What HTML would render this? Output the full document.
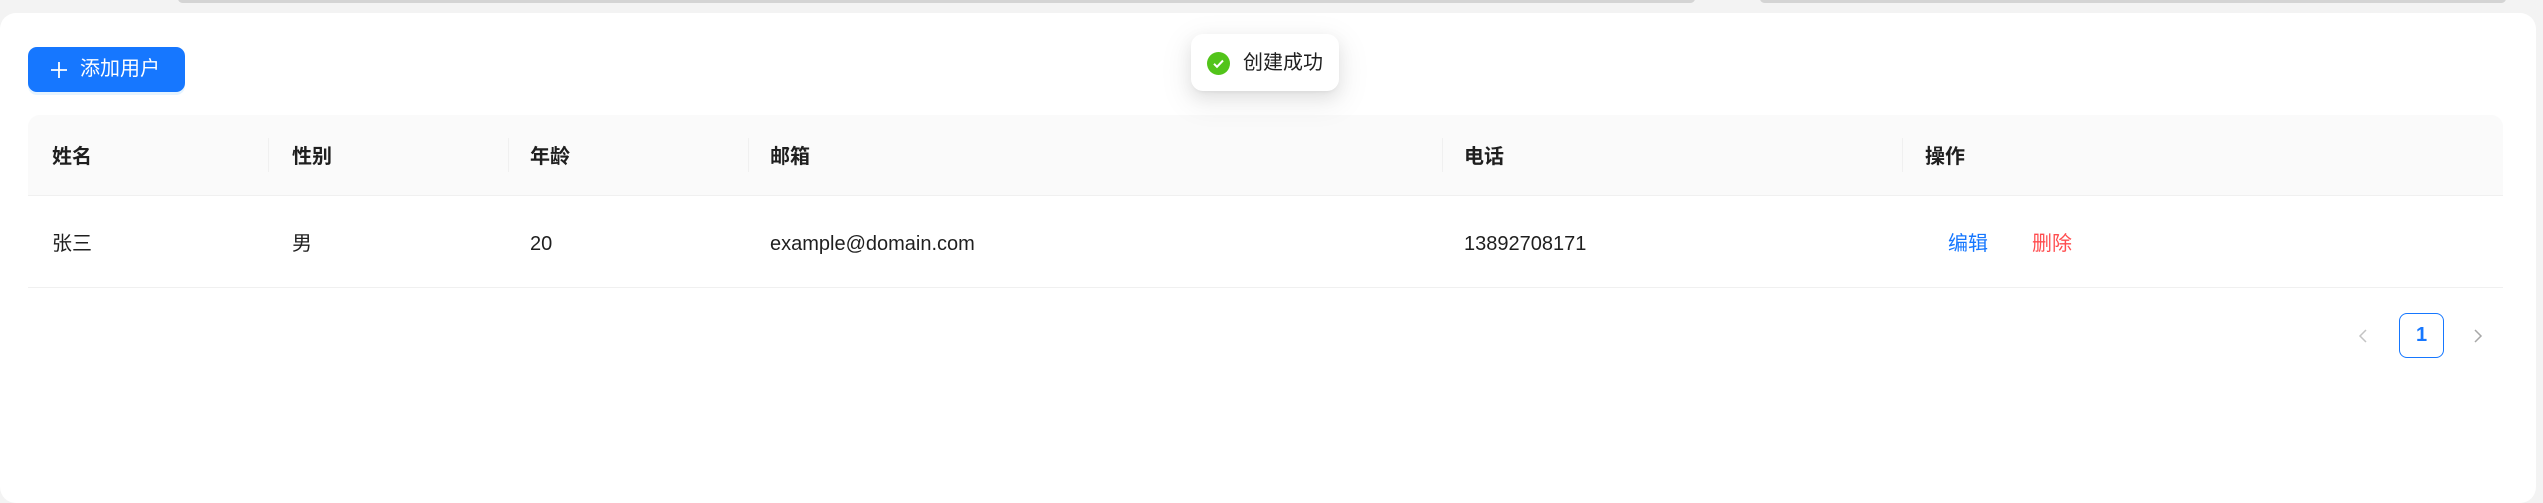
<!DOCTYPE html>
<html><head><meta charset="utf-8"><style>
*{margin:0;padding:0;box-sizing:border-box}
html,body{width:2543px;height:494px;overflow:hidden;background:#f3f3f3;font-family:"Liberation Sans","Noto Sans CJK SC",sans-serif;font-size:20px;color:rgba(0,0,0,.88)}
.pill{position:absolute;top:-6px;height:9px;background:#d4d4d4;border-radius:6px}
.card{position:absolute;left:0;top:13px;width:2536px;height:490px;background:#fff;border-radius:16px}
.btn{position:absolute;left:28px;top:47px;width:157px;height:45px;background:#1677ff;border-radius:9px;color:#fff;font-size:20px;line-height:45px;padding-left:52px;box-shadow:0 3px 0 rgba(5,145,255,.1)}
.btn svg{position:absolute;left:22px;top:14px}
.toast{position:absolute;left:1191px;top:34px;width:148px;height:57px;background:#fff;border-radius:12px;box-shadow:0 6px 16px rgba(0,0,0,.08),0 3px 6px -4px rgba(0,0,0,.12),0 9px 28px 8px rgba(0,0,0,.05)}
.toast .ic{position:absolute;left:16px;top:18px;width:23px;height:23px;border-radius:50%;background:#52c41a}
.toast span{position:absolute;left:52px;top:15px;line-height:28px;color:rgba(0,0,0,.88)}
.head{position:absolute;left:28px;top:115px;width:2475px;height:81px;background:#fafafa;border-radius:12px 12px 0 0;border-bottom:1px solid #f0f0f0}
.row{position:absolute;left:28px;top:196px;width:2475px;height:92px;border-bottom:1px solid #f0f0f0}
.t{position:absolute;white-space:nowrap;line-height:28px}
.head .t{top:28px;font-weight:bold}
.row .t{top:34px}
.sep{position:absolute;top:23px;width:1px;height:34px;background:#f0f0f0}
.pg{position:absolute;left:2399px;top:313px;width:45px;height:45px;border:1px solid #1677ff;border-radius:8px;color:#1677ff;text-align:center;line-height:43px;font-weight:bold}
</style></head><body>
<div class="pill" style="left:178px;width:1517px"></div>
<div class="pill" style="left:1760px;width:746px"></div>
<div class="card"></div>
<div class="btn"><svg width="18" height="18" viewBox="0 0 18 18"><path d="M9 1v16M1 9h16" stroke="#fff" stroke-width="1.8"/></svg>添加用户</div>
<div class="head">
<div class="t" style="left:24px">姓名</div>
<div class="sep" style="left:240px"></div>
<div class="t" style="left:264px">性别</div>
<div class="sep" style="left:480px"></div>
<div class="t" style="left:502px">年龄</div>
<div class="sep" style="left:720px"></div>
<div class="t" style="left:742px">邮箱</div>
<div class="sep" style="left:1414px"></div>
<div class="t" style="left:1436px">电话</div>
<div class="sep" style="left:1874px"></div>
<div class="t" style="left:1897px">操作</div>
</div>
<div class="row">
<div class="t" style="left:24px">张三</div>
<div class="t" style="left:264px">男</div>
<div class="t" style="left:502px">20</div>
<div class="t" style="left:742px">example@domain.com</div>
<div class="t" style="left:1436px">13892708171</div>
<div class="t" style="left:1920px;color:#1677ff">编辑</div>
<div class="t" style="left:2004px;color:#ff4d4f">删除</div>
</div>
<svg style="position:absolute;left:2357px;top:328px" width="12" height="16" viewBox="0 0 12 16"><path d="M9 2L3 8l6 6" fill="none" stroke="#c4c4c4" stroke-width="1.5"/></svg>
<div class="pg">1</div>
<svg style="position:absolute;left:2472px;top:328px" width="12" height="16" viewBox="0 0 12 16"><path d="M3 2l6 6-6 6" fill="none" stroke="#a8a8a8" stroke-width="1.5"/></svg>
<div class="toast"><div class="ic"><svg width="23" height="23" viewBox="0 0 23 23"><path d="M7 11.8l3 3 6-6.3" fill="none" stroke="#fff" stroke-width="2"/></svg></div><span>创建成功</span></div>
</body></html>
